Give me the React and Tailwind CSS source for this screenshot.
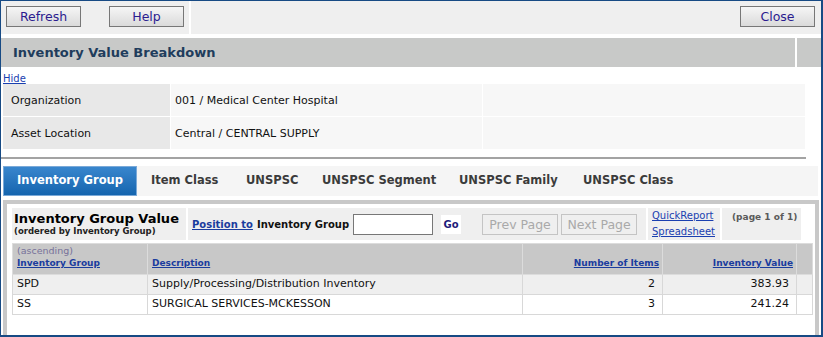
import React from 'react';

const Btn = ({ children, className = '' }) => (
  <button
    className={`h-[21px] w-[75px] border border-[#777] bg-gradient-to-b from-[#f6f6f6] to-[#dadada] text-[12.5px] font-normal leading-[19px] text-[#2a1b8f] ${className}`}
  >
    {children}
  </button>
);

const PageBtn = ({ children }) => (
  <button className="h-[21px] w-[76px] border border-[#c4c4c4] bg-[#efefef] text-[12.5px] font-normal leading-[19px] text-[#a9a9a9]">
    {children}
  </button>
);

const tabs = [
  { label: 'Item Class', w: 'w-[95px]' },
  { label: 'UNSPSC', w: 'w-[76px]' },
  { label: 'UNSPSC Segment', w: 'w-[137px]' },
  { label: 'UNSPSC Family', w: 'w-[124px]' },
  { label: 'UNSPSC Class', w: 'w-[130px]' },
];

const rows = [
  { group: 'SPD', desc: 'Supply/Processing/Distribution Inventory', items: 2, value: '383.93', bg: 'bg-[#efefef]' },
  { group: 'SS', desc: 'SURGICAL SERVICES-MCKESSON', items: 3, value: '241.24', bg: 'bg-white' },
];

export default function App() {
  return (
    <div className="w-[823px] h-[337px] overflow-hidden bg-white border-l border-t border-r-2 border-b-2 border-[#174a84] flex flex-col font-['DejaVu_Sans',sans-serif] text-[#111]">
      {/* toolbar */}
      <div className="flex h-[33px] shrink-0">
        <div className="w-[188px] bg-[#efefef] flex items-start gap-[28px] pl-[5px] pt-[5px]">
          <Btn>Refresh</Btn>
          <Btn>Help</Btn>
        </div>
        <div className="w-[2px]" />
        <div className="flex-1 bg-[#efefef] flex justify-end items-start pr-[6px] pt-[5px]">
          <Btn>Close</Btn>
        </div>
      </div>

      {/* title bar */}
      <div className="flex h-[29px] mt-[4px] shrink-0">
        <div className="flex-1 bg-[#c8c9c8] flex items-center pl-[12px] text-[13px] font-bold text-[#203c5c]">
          Inventory Value Breakdown
        </div>
        <div className="w-[2px]" />
        <div className="w-[24px] bg-[#c8c9c8]" />
      </div>

      <div className="h-[17px] shrink-0 pl-[2px] pt-[6px] text-[10px] leading-[11px]">
        <a href="#" className="text-[#1a3fb0] underline">Hide</a>
      </div>

      {/* info table */}
      <div className="ml-[2px] w-[802px] flex flex-col gap-[1px] text-[11px] shrink-0">
        <div className="flex h-[32px] gap-[1px]">
          <div className="w-[167px] bg-[#e8e8e8] flex items-center pl-[8px] pt-[2px]">Organization</div>
          <div className="w-[311px] bg-[#f7f7f7] flex items-center pl-[4px] pt-[2px]">001 / Medical Center Hospital</div>
          <div className="flex-1 bg-[#f7f7f7]" />
        </div>
        <div className="flex h-[32px] gap-[1px]">
          <div className="w-[167px] bg-[#e8e8e8] flex items-center pl-[8px] pt-[2px]">Asset Location</div>
          <div className="w-[311px] bg-[#f7f7f7] flex items-center pl-[4px] pt-[2px]">Central / CENTRAL SUPPLY</div>
          <div className="flex-1 bg-[#f7f7f7]" />
        </div>
      </div>

      <div className="mt-[8px] h-[2px] w-[805px] bg-[#a3a3a3] shrink-0" />

      {/* tabs */}
      <div className="mt-[7px] ml-[2px] w-[815px] h-[30px] bg-[#f5f5f5] flex shrink-0 text-[11.5px] font-bold">
        <div className="w-[134px] h-full border border-[#7aa9d8] bg-gradient-to-b from-[#3886cd] to-[#1465af] text-white flex items-center justify-center">
          Inventory Group
        </div>
        {tabs.map((t) => (
          <div key={t.label} className={`${t.w} h-full flex items-center pl-[14px] text-[#3b3b3b]`}>
            {t.label}
          </div>
        ))}
      </div>

      {/* panel */}
      <div className="mt-[4px] ml-[2px] w-[816px] flex-1 bg-[#c8c8c8] px-[4px] pt-[4px] flex">
        <div className="flex-1 bg-white pl-[5px] pt-[4px]">
          {/* panel header blocks */}
          <div className="flex h-[32px] gap-[2px]">
            <div className="w-[174px] bg-[#efefef] pl-[2px] flex flex-col justify-center">
              <div className="text-[13px] font-bold leading-[15px] text-black">Inventory Group Value</div>
              <div className="text-[8.5px] font-bold leading-[11px] text-[#222]">(ordered by Inventory Group)</div>
            </div>
            <div className="w-[458px] bg-[#efefef] flex items-center pl-[4px] text-[10px] font-bold">
              <a href="#" className="text-[#1a3c9e] underline">Position to</a>
              <span className="ml-[4px] text-[#111]">Inventory Group</span>
              <input className="ml-[4px] w-[80px] h-[21px] border border-[#777] bg-white" />
              <span className="ml-[8px] w-[20px] h-[19px] bg-white flex items-center justify-center text-[10px] font-bold text-[#1c1c7a]">Go</span>
              <div className="ml-[21px] flex gap-[3px]">
                <PageBtn>Prev Page</PageBtn>
                <PageBtn>Next Page</PageBtn>
              </div>
            </div>
            <div className="w-[72px] bg-[#efefef] pl-[4px] flex flex-col justify-center text-[10px] leading-[16px]">
              <a href="#" className="text-[#1a3fb0] underline">QuickReport</a>
              <a href="#" className="text-[#1a3fb0] underline">Spreadsheet</a>
            </div>
            <div className="w-[79px] bg-[#efefef] pl-[10px] pt-[3px] text-[9px] font-bold whitespace-nowrap text-[#5a5a5a]">
              (page 1 of 1)
            </div>
          </div>

          {/* data table */}
          <table className="mt-[3px] w-[800px] table-fixed border-collapse text-[11px]">
            <colgroup>
              <col className="w-[135px]" />
              <col className="w-[375px]" />
              <col className="w-[140px]" />
              <col className="w-[134px]" />
              <col className="w-[16px]" />
            </colgroup>
            <thead>
              <tr className="h-[31px] bg-[#c8c8c8] text-[9px] font-bold">
                <th className="border border-[#dcdcdc] text-left align-bottom pl-[4px] pb-[4px] font-normal">
                  <div className="text-[9.5px] leading-[12px] text-[#77729a]">(ascending)</div>
                  <a href="#" className="font-bold text-[#1a3c9e] underline leading-[12px]">Inventory Group</a>
                </th>
                <th className="border border-[#dcdcdc] text-left align-bottom pl-[4px] pb-[4px]">
                  <a href="#" className="text-[#1a3c9e] underline">Description</a>
                </th>
                <th className="border border-[#dcdcdc] text-right align-bottom pr-[3px] pb-[4px]">
                  <a href="#" className="text-[#1a3c9e] underline">Number of Items</a>
                </th>
                <th className="border border-[#dcdcdc] text-right align-bottom pr-[3px] pb-[4px]">
                  <a href="#" className="text-[#1a3c9e] underline">Inventory Value</a>
                </th>
                <th className="border border-[#dcdcdc]" />
              </tr>
            </thead>
            <tbody>
              {rows.map((r) => (
                <tr key={r.group} className={`h-[20px] ${r.bg}`}>
                  <td className="border border-[#d8d8d8] pl-[4px]">{r.group}</td>
                  <td className="border border-[#d8d8d8] pl-[4px]">{r.desc}</td>
                  <td className="border border-[#d8d8d8] text-right pr-[7px]">{r.items}</td>
                  <td className="border border-[#d8d8d8] text-right pr-[7px]">{r.value}</td>
                  <td className="border border-[#d8d8d8]" />
                </tr>
              ))}
            </tbody>
          </table>
        </div>
      </div>
    </div>
  );
}
